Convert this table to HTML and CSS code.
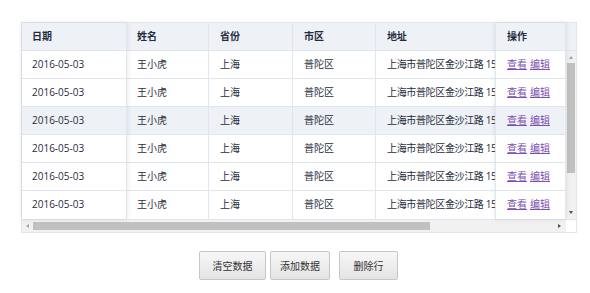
FILE: index.html
```html
<!DOCTYPE html>
<html>
<head>
<meta charset="utf-8">
<link rel="stylesheet" href="styles.css">
</head>
<body>
<div class="page">
  <div class="table">
    <div class="grid">
      <div class="fixed-left">
        <div class="cell head w-date">日期</div>
        <div class="cell w-date">2016-05-03</div>
        <div class="cell w-date">2016-05-03</div>
        <div class="cell w-date hover">2016-05-03</div>
        <div class="cell w-date">2016-05-03</div>
        <div class="cell w-date">2016-05-03</div>
        <div class="cell w-date">2016-05-03</div>
      </div>
      <div class="main">
        <div class="row head"><div class="cell w-name">姓名</div><div class="cell w-prov">省份</div><div class="cell w-city">市区</div><div class="cell w-addr">地址</div></div>
        <div class="row"><div class="cell w-name">王小虎</div><div class="cell w-prov">上海</div><div class="cell w-city">普陀区</div><div class="cell w-addr">上海市普陀区金沙江路 1518 弄</div></div>
        <div class="row"><div class="cell w-name">王小虎</div><div class="cell w-prov">上海</div><div class="cell w-city">普陀区</div><div class="cell w-addr">上海市普陀区金沙江路 1518 弄</div></div>
        <div class="row hover"><div class="cell w-name">王小虎</div><div class="cell w-prov">上海</div><div class="cell w-city">普陀区</div><div class="cell w-addr">上海市普陀区金沙江路 1518 弄</div></div>
        <div class="row"><div class="cell w-name">王小虎</div><div class="cell w-prov">上海</div><div class="cell w-city">普陀区</div><div class="cell w-addr">上海市普陀区金沙江路 1518 弄</div></div>
        <div class="row"><div class="cell w-name">王小虎</div><div class="cell w-prov">上海</div><div class="cell w-city">普陀区</div><div class="cell w-addr">上海市普陀区金沙江路 1518 弄</div></div>
        <div class="row"><div class="cell w-name">王小虎</div><div class="cell w-prov">上海</div><div class="cell w-city">普陀区</div><div class="cell w-addr">上海市普陀区金沙江路 1518 弄</div></div>
      </div>
      <div class="fixed-right">
        <div class="cell head w-op">操作</div>
        <div class="cell w-op"><a href="#">查看</a><a href="#">编辑</a></div>
        <div class="cell w-op"><a href="#">查看</a><a href="#">编辑</a></div>
        <div class="cell w-op hover"><a href="#">查看</a><a href="#">编辑</a></div>
        <div class="cell w-op"><a href="#">查看</a><a href="#">编辑</a></div>
        <div class="cell w-op"><a href="#">查看</a><a href="#">编辑</a></div>
        <div class="cell w-op"><a href="#">查看</a><a href="#">编辑</a></div>
      </div>
      <div class="gutter">
        <div class="gutter-head"></div>
        <div class="vscroll">
          <div class="arrow-up"></div>
          <div class="vthumb"></div>
          <div class="vspace"></div>
          <div class="arrow-down"></div>
        </div>
      </div>
    </div>
    <div class="hbar">
      <div class="hscroll">
        <div class="arrow-left"></div>
        <div class="hthumb"></div>
        <div class="hspace"></div>
        <div class="arrow-right"></div>
      </div>
      <div class="corner"></div>
    </div>
  </div>
  <div class="buttons">
    <button class="btn btn-a">清空数据</button>
    <button class="btn btn-b">添加数据</button>
    <button class="btn btn-c">删除行</button>
  </div>
</div>
</body>
</html>
```

FILE: styles.css
```css
html, body {
  margin: 0;
  padding: 0;
  background: #fff;
}
body {
  font-family: "Open Sans", "Noto Sans CJK SC", sans-serif;
  font-size: 10px;
  color: #1f2d3d;
}
.page {
  padding: 22px 0 0 21px;
}
.table {
  width: 554px;
  border: 1px solid #dfe6ec;
  background: #fff;
}
.grid {
  display: flex;
  height: 196px;
}
.fixed-left, .fixed-right {
  display: flex;
  flex-direction: column;
  position: relative;
  z-index: 2;
  background: #fff;
  box-shadow: 0 0 5px rgba(0, 0, 0, 0.1);
}
.main {
  display: flex;
  flex-direction: column;
  width: 368px;
  overflow: hidden;
}
.row {
  display: flex;
}
.cell {
  box-sizing: border-box;
  height: 28px;
  line-height: 27px;
  padding-left: 10px;
  border-bottom: 1px solid #dfe6ec;
  border-right: 1px solid #dfe6ec;
  white-space: nowrap;
  overflow: hidden;
  flex: none;
}
.head, .row.head .cell {
  background: #eef1f6;
  font-weight: bold;
}
.hover, .row.hover .cell {
  background: #eef1f6;
}
.fixed-left .cell:last-child,
.fixed-right .cell:last-child,
.row:last-child .cell {
  border-bottom: none;
}
.w-date { width: 105px; }
.w-name { width: 82px; }
.w-prov { width: 84px; padding-left: 11px; }
.w-city { width: 83px; padding-left: 11px; }
.w-addr { width: 119px; padding-left: 11px; border-right: none; letter-spacing: -0.35px; }
.w-op { width: 71px; padding-left: 11px; border-left: 1px solid #dfe6ec; }
a {
  color: #7d4fb0;
  text-decoration: underline;
}
a + a {
  margin-left: 3px;
}
.gutter {
  width: 10px;
  display: flex;
  flex-direction: column;
}
.gutter-head {
  height: 28px;
  box-sizing: border-box;
  background: #eef1f6;
  border-bottom: 1px solid #dfe6ec;
  flex: none;
}
.vscroll {
  flex: 1;
  background: #f1f1f1;
  display: flex;
  flex-direction: column;
  align-items: center;
}
.arrow-up {
  margin-top: 5px;
  width: 0;
  height: 0;
  border-left: 2.5px solid transparent;
  border-right: 2.5px solid transparent;
  border-bottom: 3px solid #a3a3a3;
}
.vthumb {
  margin-top: 4px;
  width: 8px;
  height: 110px;
  background: #c1c1c1;
}
.vspace { flex: 1; }
.arrow-down {
  margin-bottom: 5px;
  width: 0;
  height: 0;
  border-left: 2.5px solid transparent;
  border-right: 2.5px solid transparent;
  border-top: 3px solid #505050;
}
.hbar {
  display: flex;
  height: 12px;
  border-top: 1px solid #dfe6ec;
}
.hscroll {
  width: 544px;
  background: #f1f1f1;
  display: flex;
  align-items: center;
}
.arrow-left {
  margin-left: 4px;
  width: 0;
  height: 0;
  border-top: 2.5px solid transparent;
  border-bottom: 2.5px solid transparent;
  border-right: 3px solid #a3a3a3;
}
.hthumb {
  margin-left: 4px;
  width: 397px;
  height: 8px;
  background: #c1c1c1;
}
.hspace { flex: 1; }
.arrow-right {
  margin-right: 5px;
  width: 0;
  height: 0;
  border-top: 2.5px solid transparent;
  border-bottom: 2.5px solid transparent;
  border-left: 3px solid #505050;
}
.corner {
  flex: 1;
  background: #fff;
}
.buttons {
  display: flex;
  margin-top: 18px;
  margin-left: 178px;
}
.btn {
  box-sizing: border-box;
  height: 29px;
  font-family: "Open Sans", "Noto Sans CJK SC", sans-serif;
  font-size: 10px;
  color: #333;
  border: 1px solid #c6c6c6;
  border-radius: 2px;
  background: linear-gradient(#f7f7f7, #e4e4e4);
  padding: 0;
}
.btn-a { width: 67px; }
.btn-b { width: 60px; margin-left: 4px; }
.btn-c { width: 59px; margin-left: 9px; }
```
